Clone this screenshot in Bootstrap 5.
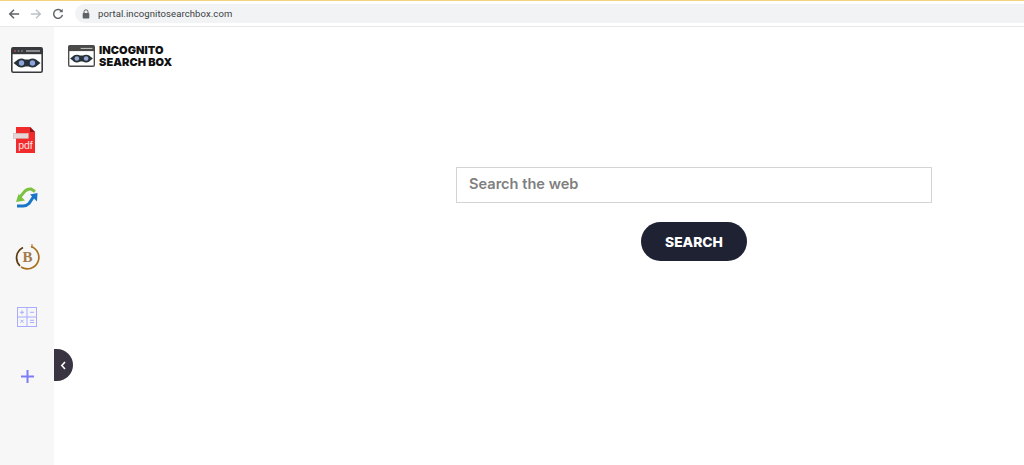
<!DOCTYPE html>
<html lang="en">
<head>
    <meta charset="UTF-8">
    <meta name="viewport" content="width=device-width, initial-scale=1.0">
    <title>Incognito Search Box</title>
    <link rel="stylesheet" href="https://cdn.jsdelivr.net/npm/bootstrap@5.3.0/dist/css/bootstrap.min.css">
    <style>
        html, body {
            height: 465px;
            overflow: hidden;
            background: #fff;
        }

        .chrome-bar {
            height: 27px;
            border-top: 1px solid #f5d27c;
            border-bottom: 1px solid #e6e8ea;
            padding: 3px 0 3px 8px;
        }

        .chrome-nav {
            width: 67px;
            gap: 10px;
        }

        .addr-bar {
            height: 19px;
            background: #f1f3f4;
            border-radius: 10px 0 0 10px;
            padding-left: 7px;
            font: 9.5px "Roboto", "Liberation Sans", sans-serif;
            color: #3c4043;
            letter-spacing: .01em;
        }

        .page-wrap {
            height: 438px;
        }

        .side-rail {
            width: 54px;
            background: #f7f7f7;
            padding-top: 20px;
        }

        .rail-top {
            height: 80px;
        }

        .rail-slot {
            height: 63px;
        }

        .rail-slot-pdf {
            height: 60px;
        }

        .rail-slot-swap {
            height: 57px;
        }

        .rail-toggle {
            position: absolute;
            left: 54px;
            top: 322px;
            width: 19px;
            height: 32px;
            background: #3a3442;
            border-radius: 0 16px 16px 0;
        }

        .brand-row {
            padding: 18px 0 0 14px;
            gap: 4px;
        }

        .brand-text {
            font: 900 11px/12px "Inter", "Liberation Sans", sans-serif;
            color: #111;
            letter-spacing: .005em;
            margin-top: -1px;
        }

        .search-area {
            width: 476px;
            margin: 99px 0 0 402px;
        }

        .search-input {
            height: 36px;
            border: 1px solid #d4d4d4;
            border-radius: 0;
            padding: 0 12px 2px;
            font: 600 14.6px "Inter", "Liberation Sans", sans-serif;
            color: #777;
        }

        .search-input::placeholder {
            color: #7f7f7f;
            opacity: 1;
        }

        .search-btn {
            width: 106px;
            height: 39px;
            margin-top: 19px;
            padding: 0;
            background: #1f2233;
            border: 0;
            border-radius: 20px;
            color: #fff;
            font: 800 13.8px "Inter", "Liberation Sans", sans-serif;
        }
    </style>
</head>
<body>

    <!-- browser toolbar -->
    <div class="chrome-bar d-flex align-items-center">
        <div class="chrome-nav d-flex align-items-center flex-shrink-0">
            <svg width="12" height="12" viewBox="0 0 14 14" fill="none" stroke="#5f6368" stroke-width="1.7"><path d="M13 7H2M7 2 2 7l5 5"/></svg>
            <svg width="12" height="12" viewBox="0 0 14 14" fill="none" stroke="#bdc1c6" stroke-width="1.7"><path d="M1 7h11M7 2l5 5-5 5"/></svg>
            <svg width="12" height="12" viewBox="0 0 14 14" fill="none" stroke="#5f6368" stroke-width="1.7"><path d="M11.6 4.2A5.2 5.2 0 1 0 12.2 8"/><path d="M12.5 1v4h-4z" fill="#5f6368" stroke="none"/></svg>
        </div>
        <div class="addr-bar flex-grow-1 d-flex align-items-center gap-2">
            <svg width="8" height="10" viewBox="0 0 8 10"><path d="M2 4V2.8a2 2 0 0 1 4 0V4" fill="none" stroke="#5f6368" stroke-width="1"/><rect x=".7" y="4" width="6.6" height="5.4" rx=".7" fill="#5f6368"/></svg>
            <span>portal.incognitosearchbox.com</span>
        </div>
    </div>

    <div class="page-wrap d-flex position-relative">
        <!-- left rail -->
        <div class="side-rail flex-shrink-0">
            <div class="rail-top d-flex justify-content-center align-items-start">
                <svg width="32" height="26" viewBox="0 0 32 26">
                    <rect x=".8" y=".8" width="30.4" height="24.4" rx="1.5" fill="#fff" stroke="#37393c" stroke-width="1.6"/>
                    <rect x=".8" y=".8" width="30.4" height="6.4" fill="#37393c"/>
                    <path d="M15 4h14" stroke="#ddd" stroke-width="1"/>
                    <circle cx="4" cy="4" r="1" fill="#a55"/><circle cx="7.500" cy="4" r="1" fill="#777"/><circle cx="11" cy="4" r="1" fill="#777"/>
                    <path d="M2.500 16 7 12.500h18l4.500 3.500-4.500 3.500H7z" fill="#263238"/>
                    <circle cx="10.500" cy="16" r="4.600" fill="#263238"/>
                    <circle cx="21.500" cy="16" r="4.600" fill="#263238"/>
                    <circle cx="10.500" cy="16" r="2.700" fill="#8ea4de"/>
                    <circle cx="21.500" cy="16" r="2.700" fill="#8ea4de"/>
                </svg>
            </div>
            <div class="rail-slot-pdf d-flex justify-content-center align-items-start">
                <svg width="28" height="27" viewBox="0 0 28 27">
                    <path d="M3 0h14l5 5v21H3z" fill="#f12b2b"/>
                    <path d="M17 0l5 5h-5z" fill="#8d1414"/>
                    <rect x=".3" y="6.300" width="15" height="5" fill="#e8d5d5" stroke="#c9b9b9" stroke-width=".6"/>
                    <text x="12.500" y="22" text-anchor="middle" font-family="Liberation Sans, sans-serif" font-size="10.500" fill="#ffe3e3">pdf</text>
                </svg>
            </div>
            <div class="rail-slot-swap d-flex justify-content-center align-items-start">
                <svg width="22" height="21" viewBox="0 0 22 21" fill="none" stroke-width="3">
                    <path d="M4 10 9 4Q12 1.500 15 2l4 2.500" stroke="#7cc242"/>
                    <path d="M0 15l9-1.500-6.500-6.500z" fill="#7cc242" stroke="none"/>
                    <path d="M18 9l-5 7.500Q10 19.500 6 19H1" stroke="#1976c8"/>
                    <path d="M14 7.500l7.500-1.500-.5 8.500z" fill="#1976c8" stroke="none"/>
                </svg>
            </div>
            <div class="rail-slot d-flex justify-content-center align-items-start">
                <svg width="25" height="26" viewBox="0 0 25 26" fill="none">
                    <path d="M16 2.500A11.500 11.500 0 1 1 6 23" stroke="#a8701c" stroke-width="1.700"/>
                    <path d="M8 3.500A11.500 11.500 0 0 0 5 22" stroke="#5c3a10" stroke-width="1.700"/>
                    <path d="M17 0v4" stroke="#a8701c" stroke-width="1"/>
                    <text x="12.500" y="18" text-anchor="middle" font-family="Liberation Serif, serif" font-size="15" font-weight="700" fill="#a5794a">B</text>
                </svg>
            </div>
            <div class="rail-slot d-flex justify-content-center align-items-start">
                <svg width="20" height="20" viewBox="0 0 20 20" fill="none" stroke="#a9acff" stroke-width="1">
                    <rect x=".5" y=".5" width="19" height="19"/>
                    <path d="M10 0v20M0 10h20"/>
                    <path d="M3 5.300h4M5 3.300v4M13 5.300h4M3.500 12.800l3 3M6.500 12.800l-3 3M13 13.300h4M13 15.500h4"/>
                </svg>
            </div>
            <div class="rail-slot d-flex justify-content-center align-items-start">
                <svg width="13" height="13" viewBox="0 0 13 13" stroke="#7c7cf8" stroke-width="2"><path d="M6.500 0v13M0 6.500h13"/></svg>
            </div>
        </div>

        <div class="rail-toggle d-flex align-items-center justify-content-center">
            <svg width="7" height="9" viewBox="0 0 7 9" fill="none" stroke="#fff" stroke-width="1.600"><path d="M5 1 1.800 4.500 5 8"/></svg>
        </div>

        <!-- main content -->
        <div class="flex-grow-1">
            <div class="brand-row d-flex">
                <svg width="27" height="22" viewBox="0 0 32 26">
                    <rect x=".8" y=".8" width="30.4" height="24.400" rx="1.500" fill="#fff" stroke="#4a4a4a" stroke-width="1.600"/>
                    <rect x=".8" y=".8" width="30.4" height="6.400" fill="#4a4a4a"/>
                    <path d="M15 4h14" stroke="#ddd" stroke-width="1"/>
                    <path d="M2.500 16 7 12.500h18l4.500 3.500-4.500 3.500H7z" fill="#263238"/>
                    <circle cx="10.500" cy="16" r="4.600" fill="#263238"/>
                    <circle cx="21.500" cy="16" r="4.600" fill="#263238"/>
                    <circle cx="10.500" cy="16" r="2.700" fill="#9aaad8"/>
                    <circle cx="21.500" cy="16" r="2.700" fill="#9aaad8"/>
                </svg>
                <div class="brand-text">INCOGNITO<br>SEARCH BOX</div>
            </div>
            <div class="search-area text-center">
                <input class="form-control search-input" type="text" placeholder="Search the web">
                <button class="btn search-btn" type="button">SEARCH</button>
            </div>
        </div>
    </div>

    <script src="https://cdn.jsdelivr.net/npm/bootstrap@5.3.0/dist/js/bootstrap.bundle.min.js"></script>
</body>
</html>
